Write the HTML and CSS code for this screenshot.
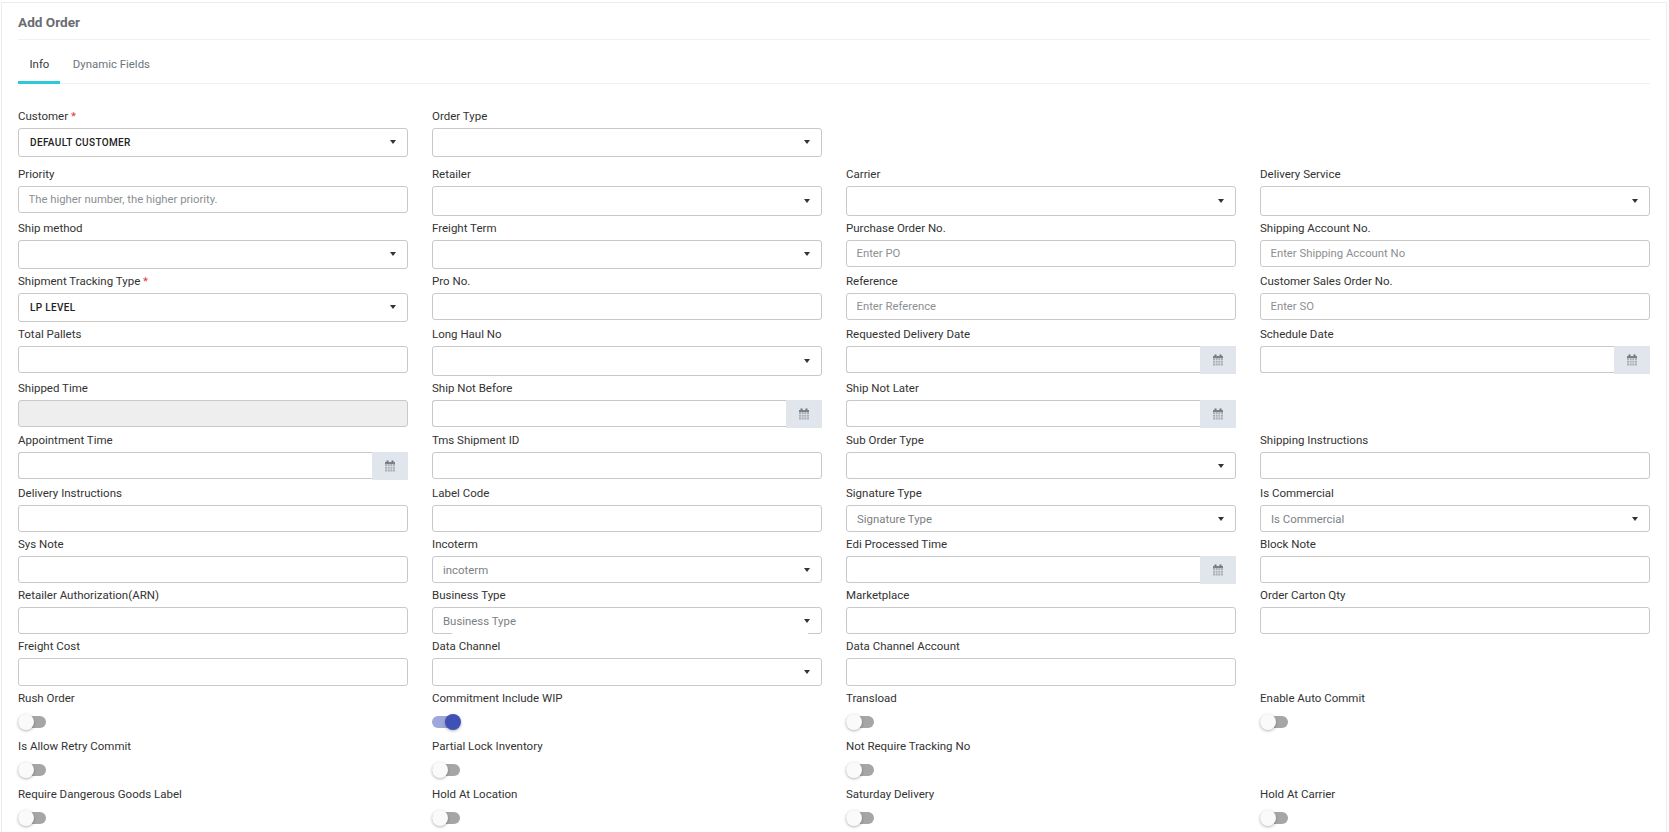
FILE: index.html
```html
<!DOCTYPE html>
<html lang="en">
<head>
<meta charset="utf-8">
<title>Add Order</title>
<link rel="stylesheet" href="styles.css">
</head>
<body>
<svg class="defs" width="0" height="0" aria-hidden="true"><symbol id="cal" viewBox="0 0 12 12"><rect x="2.5" y="0.5" width="2" height="3" fill="#6f747c"/><rect x="7.5" y="0.5" width="2" height="3" fill="#6f747c"/><rect x="1" y="2" width="10" height="9.5" fill="#a9b0ba"/><rect x="1" y="2" width="10" height="2" fill="#7b8089"/><path d="M3.5 4v7.5M6 4v7.5M8.5 4v7.5M1 6.5h10M1 9h10" stroke="#dfe3ea" stroke-width=".7"/></symbol></svg>
<main class="card">
  <h1 class="title">Add Order</h1>
  <nav class="tabs">
    <a class="tab active">Info</a>
    <a class="tab">Dynamic Fields</a>
  </nav>
  <form class="form">
    <div class="field"><label class="lbl">Customer <em>*</em></label><div class="select tall"><span class="val">DEFAULT CUSTOMER</span><i class="caret"></i></div></div>
    <div class="field"><label class="lbl">Order Type</label><div class="select tall"><i class="caret"></i></div></div>
    <div class="field"></div>
    <div class="field"></div>

    <div class="field"><label class="lbl">Priority</label><input class="input" placeholder="The higher number, the higher priority."></div>
    <div class="field"><label class="lbl">Retailer</label><div class="select taller"><i class="caret"></i></div></div>
    <div class="field"><label class="lbl">Carrier</label><div class="select taller"><i class="caret"></i></div></div>
    <div class="field"><label class="lbl">Delivery Service</label><div class="select taller"><i class="caret"></i></div></div>

    <div class="field"><label class="lbl">Ship method</label><div class="select tall"><i class="caret"></i></div></div>
    <div class="field"><label class="lbl">Freight Term</label><div class="select tall"><i class="caret"></i></div></div>
    <div class="field"><label class="lbl">Purchase Order No.</label><input class="input" placeholder="Enter PO"></div>
    <div class="field"><label class="lbl">Shipping Account No.</label><input class="input" placeholder="Enter Shipping Account No"></div>

    <div class="field"><label class="lbl">Shipment Tracking Type <em>*</em></label><div class="select tall"><span class="val">LP LEVEL</span><i class="caret"></i></div></div>
    <div class="field"><label class="lbl">Pro No.</label><input class="input"></div>
    <div class="field"><label class="lbl">Reference</label><input class="input" placeholder="Enter Reference"></div>
    <div class="field"><label class="lbl">Customer Sales Order No.</label><input class="input" placeholder="Enter SO"></div>

    <div class="field"><label class="lbl">Total Pallets</label><input class="input"></div>
    <div class="field"><label class="lbl">Long Haul No</label><div class="select taller"><i class="caret"></i></div></div>
    <div class="field"><label class="lbl">Requested Delivery Date</label><div class="date"><input class="input"><span class="addon"><svg width="12" height="12"><use href="#cal"/></svg></span></div></div>
    <div class="field"><label class="lbl">Schedule Date</label><div class="date"><input class="input"><span class="addon"><svg width="12" height="12"><use href="#cal"/></svg></span></div></div>

    <div class="field"><label class="lbl">Shipped Time</label><input class="input" disabled></div>
    <div class="field"><label class="lbl">Ship Not Before</label><div class="date"><input class="input"><span class="addon"><svg width="12" height="12"><use href="#cal"/></svg></span></div></div>
    <div class="field"><label class="lbl">Ship Not Later</label><div class="date"><input class="input"><span class="addon"><svg width="12" height="12"><use href="#cal"/></svg></span></div></div>
    <div class="field"></div>

    <div class="field"><label class="lbl">Appointment Time</label><div class="date"><input class="input"><span class="addon"><svg width="12" height="12"><use href="#cal"/></svg></span></div></div>
    <div class="field"><label class="lbl">Tms Shipment ID</label><input class="input"></div>
    <div class="field"><label class="lbl">Sub Order Type</label><div class="select"><i class="caret"></i></div></div>
    <div class="field"><label class="lbl">Shipping Instructions</label><input class="input"></div>

    <div class="field"><label class="lbl">Delivery Instructions</label><input class="input"></div>
    <div class="field"><label class="lbl">Label Code</label><input class="input"></div>
    <div class="field"><label class="lbl">Signature Type</label><div class="select"><span class="ph">Signature Type</span><i class="caret"></i></div></div>
    <div class="field"><label class="lbl">Is Commercial</label><div class="select"><span class="ph">Is Commercial</span><i class="caret"></i></div></div>

    <div class="field"><label class="lbl">Sys Note</label><input class="input"></div>
    <div class="field"><label class="lbl">Incoterm</label><div class="select"><span class="ph">incoterm</span><i class="caret"></i></div></div>
    <div class="field"><label class="lbl">Edi Processed Time</label><div class="date"><input class="input"><span class="addon"><svg width="12" height="12"><use href="#cal"/></svg></span></div></div>
    <div class="field"><label class="lbl">Block Note</label><input class="input"></div>

    <div class="field"><label class="lbl">Retailer Authorization(ARN)</label><input class="input"></div>
    <div class="field"><label class="lbl">Business Type</label><div class="select cut"><span class="ph">Business Type</span><i class="caret"></i></div></div>
    <div class="field"><label class="lbl">Marketplace</label><input class="input"></div>
    <div class="field"><label class="lbl">Order Carton Qty</label><input class="input"></div>

    <div class="field"><label class="lbl">Freight Cost</label><input class="input roomy"></div>
    <div class="field"><label class="lbl">Data Channel</label><div class="select roomy"><i class="caret"></i></div></div>
    <div class="field"><label class="lbl">Data Channel Account</label><input class="input roomy"></div>
    <div class="field"></div>

    <div class="field"><label class="lbl">Rush Order</label><span class="switch"></span></div>
    <div class="field"><label class="lbl">Commitment Include WIP</label><span class="switch on"></span></div>
    <div class="field"><label class="lbl">Transload</label><span class="switch"></span></div>
    <div class="field"><label class="lbl">Enable Auto Commit</label><span class="switch"></span></div>

    <div class="field"><label class="lbl">Is Allow Retry Commit</label><span class="switch"></span></div>
    <div class="field"><label class="lbl">Partial Lock Inventory</label><span class="switch"></span></div>
    <div class="field"><label class="lbl">Not Require Tracking No</label><span class="switch"></span></div>
    <div class="field"></div>

    <div class="field"><label class="lbl">Require Dangerous Goods Label</label><span class="switch"></span></div>
    <div class="field"><label class="lbl">Hold At Location</label><span class="switch"></span></div>
    <div class="field"><label class="lbl">Saturday Delivery</label><span class="switch"></span></div>
    <div class="field"><label class="lbl">Hold At Carrier</label><span class="switch"></span></div>
  </form>
</main>
</body>
</html>
```

FILE: styles.css
```css
* { box-sizing: border-box; }
html, body { height: 832px; overflow: hidden; }
body {
  margin: 0;
  padding: 2px 2px 0 1px;
  background: #fff;
  font-family: Roboto, "Liberation Sans", Arial, sans-serif;
  font-size: 11.5px;
  color: #333;
}
.defs { position: absolute; }
.card {
  border: 1px solid #e9edf2;
  border-bottom: 0;
  padding: 0 16px 40px;
  background: #fff;
}
.title {
  margin: 0;
  height: 37px;
  line-height: 38px;
  font-size: 13.6px;
  font-weight: 700;
  color: #6a6c70;
  border-bottom: 1px solid #eef0f3;
}
.tabs {
  display: flex;
  height: 44px;
  border-bottom: 1px solid #eef0f3;
}
.tab {
  height: 44px;
  padding: 0 11.5px 0 12.5px;
  line-height: 49px;
  font-size: 11.4px;
  color: #6c757d;
}
.tab.active {
  padding: 0 11px 0 11.5px;
  color: #343a40;
  border-bottom: 3px solid #2fc8d8;
}
.form {
  display: grid;
  grid-template-columns: repeat(4, 390px);
  grid-template-rows: 58px 54px 53px 53px 54px 52px 53px 51px 51px 51px 52px 48px 48px 48px;
  column-gap: 24px;
  margin-top: 23px;
}
.field { display: flex; flex-direction: column; align-items: stretch; }
.lbl {
  height: 18px;
  margin-bottom: 3px;
  line-height: 18px;
  font-size: 11.5px;
  color: #333;
}
.lbl em { font-style: normal; color: #e3342f; }
.input, .select {
  border: 1px solid #c9c9c9;
  border-radius: 3px;
  background: #fff;
}
.input {
  display: block;
  width: 100%;
  height: 27px;
  padding: 0 9.5px;
  font-family: inherit;
  font-size: 11.3px;
  color: #333;
  outline: 0;
}
.input::placeholder { color: #8c8f93; opacity: 1; }
.input:disabled { background: #eeeeee; }
.select {
  position: relative;
  display: flex;
  align-items: center;
  height: 27px;
  padding: 0 10px;
}
.select.tall { height: 28.5px; }
.select.taller { height: 29.5px; }
.roomy, .select.roomy { height: 27.5px; }
.val { padding-left: 1px; font-size: 10px; letter-spacing: .35px; font-weight: 500; color: #222; }
.ph { font-size: 11.4px; color: #7b7f84; }
.caret {
  position: absolute;
  right: 11px;
  top: 50%;
  margin-top: -2px;
  width: 0;
  height: 0;
  border-style: solid;
  border-width: 4px 3.5px 0;
  border-color: #333 transparent transparent;
}
.select.cut::after {
  content: "";
  position: absolute;
  left: 19px;
  right: 13px;
  bottom: -1px;
  height: 1px;
  background: #fff;
}
.date { display: flex; align-items: flex-start; }
.date .input {
  flex: 1;
  min-width: 0;
  border-radius: 3px 0 0 3px;
  border-right: 0;
}
.addon {
  display: flex;
  align-items: center;
  justify-content: center;
  flex: 0 0 36px;
  height: 28px;
  background: #e1e5ec;
}
.switch {
  position: relative;
  display: block;
  width: 28px;
  height: 12px;
  margin-top: 6px;
  border-radius: 6px;
  background: #a6a6a6;
}
.switch::after {
  content: "";
  position: absolute;
  left: 0;
  top: -2px;
  width: 16px;
  height: 16px;
  border-radius: 50%;
  background: #fafafa;
  box-shadow: 0 1px 3px rgba(0, 0, 0, .3);
}
.switch.on { background: #9fa8da; }
.switch.on::after { left: 13px; background: #3f51b5; }
```
